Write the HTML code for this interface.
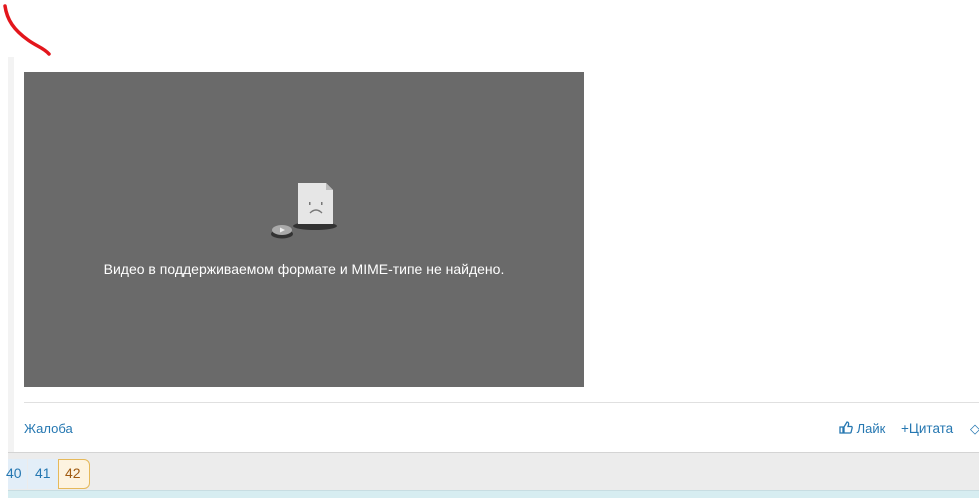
<!DOCTYPE html>
<html><head><meta charset="utf-8"><style>
*{margin:0;padding:0;box-sizing:border-box}
body{width:979px;height:498px;overflow:hidden;background:#fff;position:relative;font-family:"Segoe UI","Liberation Sans","DejaVu Sans",sans-serif}
.a{position:absolute}
.link{color:#2577b1;font-size:13px}
</style></head><body>
<svg class="a" style="left:0;top:0" width="60" height="60"><path d="M5 6 C7 20 14 30 28 40 C36 46 44 48 49 54" stroke="#e3161c" stroke-width="3.5" fill="none" stroke-linecap="round"/></svg>
<div class="a" style="left:8px;top:57px;width:6px;height:395px;background:#f3f3f3"></div>
<div class="a" style="left:24px;top:72px;width:560px;height:315px;background:#6a6a6a"></div>
<svg class="a" style="left:266px;top:178px" width="80" height="65">
<ellipse cx="49" cy="48" rx="22" ry="4" fill="#333"/>
<path d="M32 5 H60 L67 12 V46 H32 Z" fill="#e6e6e6"/>
<path d="M60 5 V12 H67" fill="#bbb"/>
<rect x="43" y="24" width="1.5" height="3" fill="#777"/><rect x="55" y="24" width="1.5" height="3" fill="#777"/>
<path d="M44 35 Q50 29 56 35" stroke="#777" stroke-width="1.3" fill="none"/>
<ellipse cx="16" cy="56" rx="11" ry="4.5" fill="#333"/>
<ellipse cx="16" cy="52" rx="10" ry="5" fill="#aaa"/>
<path d="M14 49.5 L19 52 L14 54.5Z" fill="#eee"/>
</svg>
<div class="a" style="left:24px;top:261px;width:560px;text-align:center;color:#fff;font-size:14px">Видео в поддерживаемом формате и MIME-типе не найдено.</div>
<div class="a" style="left:24px;top:402px;width:955px;height:1px;background:#e0e0e0"></div>
<div class="a link" style="left:24px;top:421px">Жалоба</div>
<div class="a link" style="left:839px;top:421px"><svg width="14" height="13" style="vertical-align:-1px"><path d="M1 6h3v6H1z M5 6 L8 1 Q10 1 9.5 4 L9 5.5 H12.5 Q13.5 6 13 7.5 L12 11.5 Q11.5 12 11 12 H5Z" fill="none" stroke="#2577b1" stroke-width="1.3"/></svg> Лайк</div>
<div class="a link" style="left:901px;top:421px;font-size:13.5px">+Цитата</div>
<div class="a link" style="left:970px;top:421px">◇</div>
<div class="a" style="left:8px;top:452px;width:971px;height:38px;background:#ececec;border-top:1px solid #d4d4d4"></div>
<div class="a" style="left:8px;top:459px;width:19px;height:30px;background:#e3eef8"></div>
<div class="a" style="left:28px;top:459px;width:30px;height:30px;background:#e3eef8"></div>
<div class="a" style="left:58px;top:459px;width:32px;height:30px;background:#fdf3e0;border:1px solid #e6b95a;border-radius:0 6px 6px 0"></div>
<div class="a link" style="left:6px;top:465px;font-size:14px">40</div>
<div class="a link" style="left:35px;top:465px;font-size:14px">41</div>
<div class="a" style="left:65px;top:465px;color:#a05a10;font-size:14px">42</div>
<div class="a" style="left:8px;top:490px;width:971px;height:8px;background:#d7edf1;border-top:1px solid #c8dde2"></div>
</body></html>
